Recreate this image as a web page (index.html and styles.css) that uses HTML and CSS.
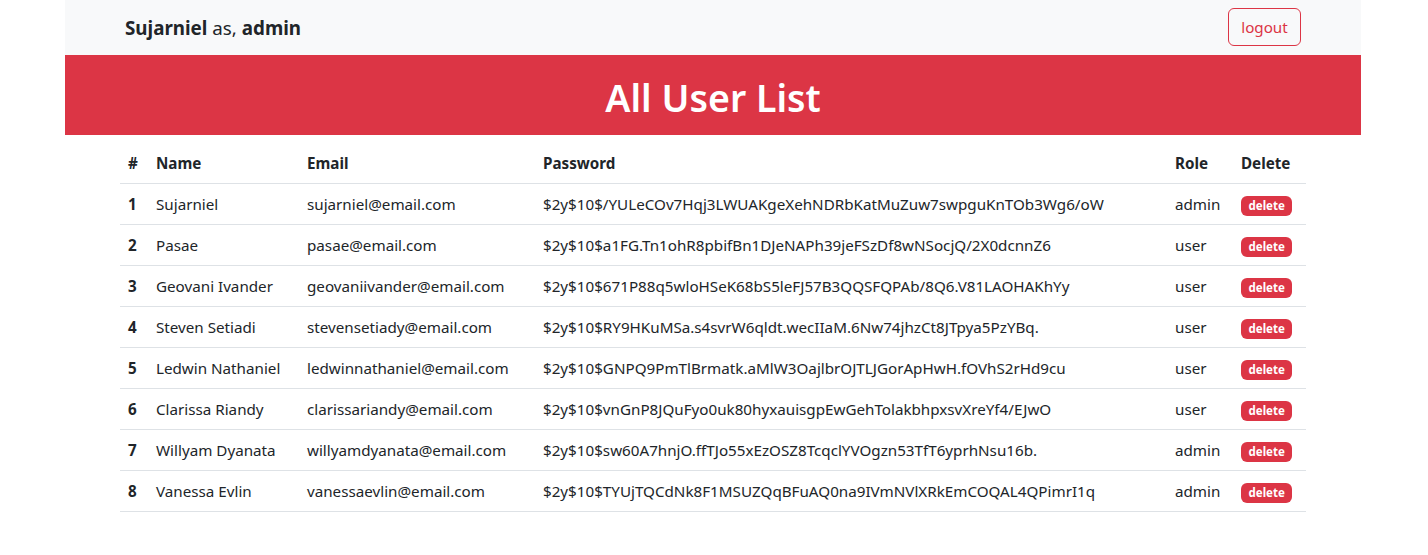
FILE: index.html
```html
<!DOCTYPE html>
<html lang="en">
<head>
<meta charset="utf-8">
<title>All User List</title>
<link rel="stylesheet" href="styles.css">
</head>
<body>
<div class="page">
  <nav class="navbar">
    <div class="brand"><b>Sujarniel</b> as, <b>admin</b></div>
    <button class="btn-logout">logout</button>
  </nav>
  <header class="banner">
    <h1>All User List</h1>
  </header>
  <div class="table-wrap">
    <table class="users">
      <colgroup>
        <col class="c-num"><col class="c-name"><col class="c-email"><col class="c-pass"><col class="c-role"><col class="c-del">
      </colgroup>
      <thead>
        <tr><th>#</th><th>Name</th><th>Email</th><th>Password</th><th>Role</th><th>Delete</th></tr>
      </thead>
      <tbody>
        <tr><th>1</th><td>Sujarniel</td><td>sujarniel@email.com</td><td>$2y$10$/YULeCOv7Hqj3LWUAKgeXehNDRbKatMuZuw7swpguKnTOb3Wg6/oW</td><td>admin</td><td><span class="badge">delete</span></td></tr>
        <tr><th>2</th><td>Pasae</td><td>pasae@email.com</td><td>$2y$10$a1FG.Tn1ohR8pbifBn1DJeNAPh39jeFSzDf8wNSocjQ/2X0dcnnZ6</td><td>user</td><td><span class="badge">delete</span></td></tr>
        <tr><th>3</th><td>Geovani Ivander</td><td>geovaniivander@email.com</td><td>$2y$10$671P88q5wloHSeK68bS5leFJ57B3QQSFQPAb/8Q6.V81LAOHAKhYy</td><td>user</td><td><span class="badge">delete</span></td></tr>
        <tr><th>4</th><td>Steven Setiadi</td><td>stevensetiady@email.com</td><td>$2y$10$RY9HKuMSa.s4svrW6qldt.wecIIaM.6Nw74jhzCt8JTpya5PzYBq.</td><td>user</td><td><span class="badge">delete</span></td></tr>
        <tr><th>5</th><td>Ledwin Nathaniel</td><td>ledwinnathaniel@email.com</td><td>$2y$10$GNPQ9PmTlBrmatk.aMlW3OajlbrOJTLJGorApHwH.fOVhS2rHd9cu</td><td>user</td><td><span class="badge">delete</span></td></tr>
        <tr><th>6</th><td>Clarissa Riandy</td><td>clarissariandy@email.com</td><td>$2y$10$vnGnP8JQuFyo0uk80hyxauisgpEwGehTolakbhpxsvXreYf4/EJwO</td><td>user</td><td><span class="badge">delete</span></td></tr>
        <tr><th>7</th><td>Willyam Dyanata</td><td>willyamdyanata@email.com</td><td>$2y$10$sw60A7hnjO.ffTJo55xEzOSZ8TcqclYVOgzn53TfT6yprhNsu16b.</td><td>admin</td><td><span class="badge">delete</span></td></tr>
        <tr><th>8</th><td>Vanessa Evlin</td><td>vanessaevlin@email.com</td><td>$2y$10$TYUjTQCdNk8F1MSUZQqBFuAQ0na9IVmNVlXRkEmCOQAL4QPimrI1q</td><td>admin</td><td><span class="badge">delete</span></td></tr>
      </tbody>
    </table>
  </div>
</div>
</body>
</html>
```

FILE: styles.css
```css
* { box-sizing: border-box; }

body {
  margin: 0;
  background: #fff;
  color: #212529;
  font-family: "Noto Sans", "Open Sans", sans-serif;
  font-size: 15.2px;
  line-height: 1.5;
}

.page {
  width: 1296px;
  margin-left: 65px;
}

.navbar {
  height: 55px;
  background: #f8f9fa;
  display: flex;
  align-items: center;
  justify-content: space-between;
  padding: 0 60px;
}

.brand {
  font-size: 18.8px;
  line-height: 30px;
}

.brand b { font-weight: 700; }

.btn-logout {
  font-family: inherit;
  font-size: 15.2px;
  line-height: 24px;
  color: #dc3545;
  background: transparent;
  border: 1px solid #dc3545;
  border-radius: 6px;
  padding: 6px 12px;
  height: 38px;
  width: 73px;
  margin-bottom: 1px;
}

.banner {
  background: #dc3545;
  height: 80px;
  display: flex;
  align-items: center;
  justify-content: center;
}

.banner h1 {
  margin: 0 0 -4px;
  color: #fff;
  font-size: 37.5px;
  font-weight: 600;
  line-height: 1.2;
}

.table-wrap {
  padding: 8px 55px 0;
}

.users {
  width: 1186px;
  border-collapse: collapse;
  table-layout: fixed;
}

.c-num { width: 28px; }
.c-name { width: 151px; }
.c-email { width: 236px; }
.c-pass { width: 632px; }
.c-role { width: 66px; }
.c-del { width: 73px; }

.users th,
.users td {
  padding: 8px;
  text-align: left;
  vertical-align: top;
  border-bottom: 1px solid #dee2e6;
  white-space: nowrap;
  line-height: 24px;
}

.users th { font-weight: 700; }

.users td { font-weight: 400; }

.badge {
  display: inline-block;
  background: #dc3545;
  color: #fff;
  font-size: 11.5px;
  font-weight: 700;
  line-height: 1;
  padding: 4px 7.5px 4.5px;
  border-radius: 6px;
  vertical-align: middle;
}
```
